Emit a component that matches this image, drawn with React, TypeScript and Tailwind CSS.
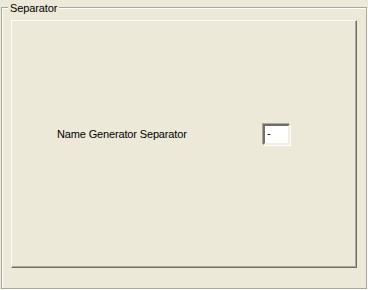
import React from "react";

export default function App() {
  return (
    <div
      className="w-[368px] h-[290px] bg-[#ece9d8] overflow-hidden text-[11px] leading-[13px] text-black"
      style={{ fontFamily: '"Liberation Sans", Arial, sans-serif' }}
    >
      <div className="relative ml-[1px] mt-[7px] w-[366px] h-[282px] border border-[#aca899] shadow-[inset_1px_1px_0_#ffffff,1px_1px_0_#ffffff]">
        <div className="absolute left-[6px] top-[-6px] px-[2px] bg-[#ece9d8] tracking-[-0.1px]">Separator</div>
        <div className="ml-[9px] mt-[12px] w-[346px] h-[248px] border-t border-l border-t-white border-l-white border-r border-b border-r-[#716f64] border-b-[#716f64] shadow-[inset_-1px_-1px_0_#aca899]">
          <div className="flex items-center pt-[103px] pl-[45px]">
            <div className="w-[206px] tracking-[-0.15px]">Name Generator Separator</div>
            <div className="w-[27px] h-[21px] bg-white border-2 border-t-[#716f64] border-l-[#716f64] border-r-[#f1efe2] border-b-[#f1efe2] shadow-[-1px_-1px_0_#aca899,1px_1px_0_#ffffff] pt-[1px] pl-[2px]">
              -
            </div>
          </div>
        </div>
      </div>
    </div>
  );
}
